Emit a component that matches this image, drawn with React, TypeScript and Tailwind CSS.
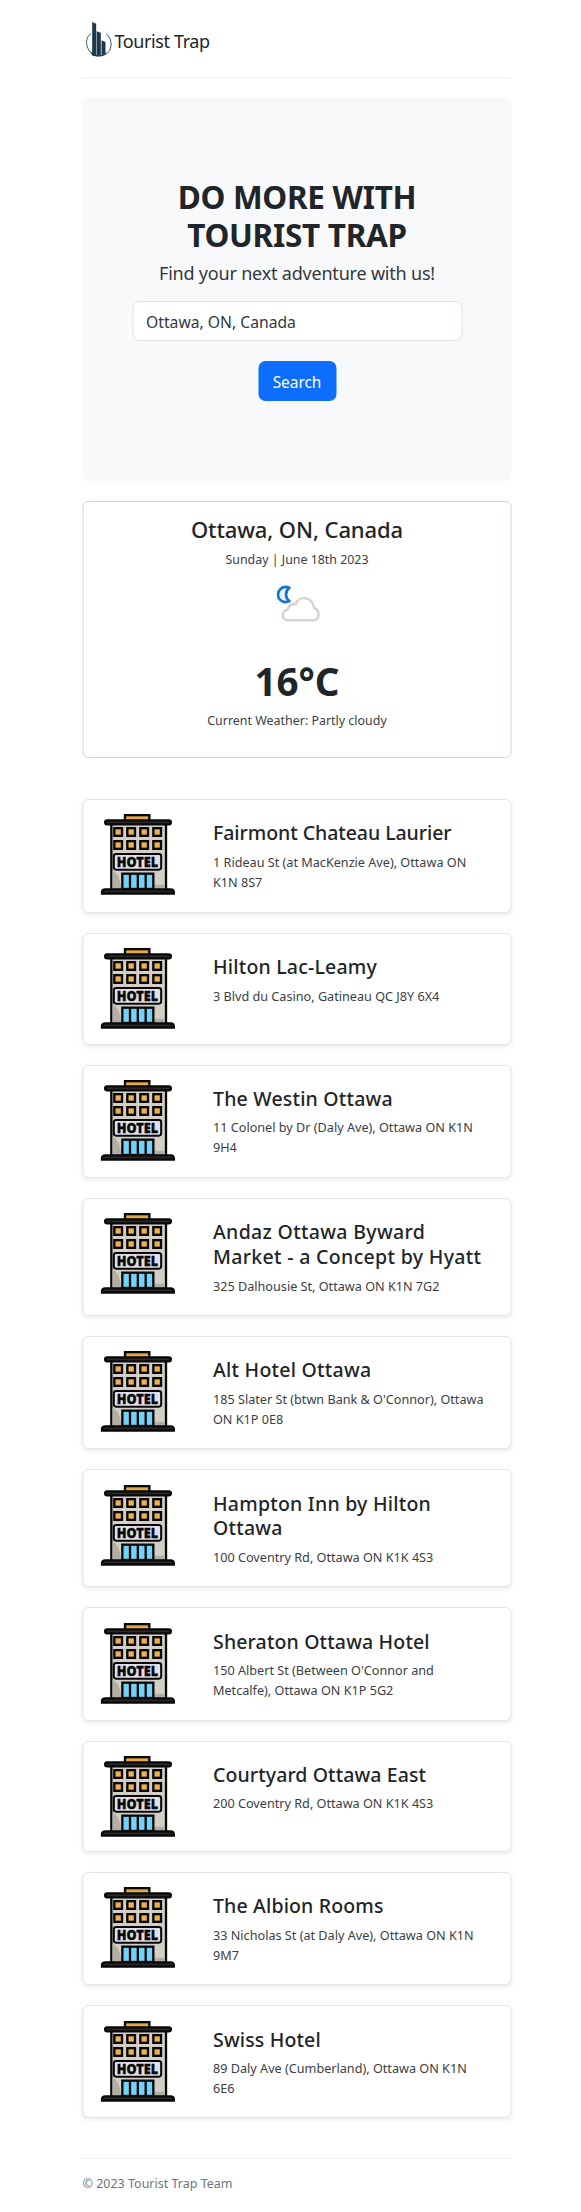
type Hotel = { name: string; address: string; size: string; tracking?: string };

const hotels: Hotel[] = [
  { name: "Fairmont Chateau Laurier", address: "1 Rideau St (at MacKenzie Ave), Ottawa ON K1N 8S7", size: "h-[114px]", tracking: "tracking-[-0.050px]" },
  { name: "Hilton Lac-Leamy", address: "3 Blvd du Casino, Gatineau QC J8Y 6X4", size: "h-[111.5px]", tracking: "tracking-[0.200px]" },
  { name: "The Westin Ottawa", address: "11 Colonel by Dr (Daly Ave), Ottawa ON K1N 9H4", size: "h-[113.5px]", tracking: "tracking-[0.200px]" },
  { name: "Andaz Ottawa Byward Market - a Concept by Hyatt", address: "325 Dalhousie St, Ottawa ON K1N 7G2", size: "h-[118px]", tracking: "tracking-[0.330px]" },
  { name: "Alt Hotel Ottawa", address: "185 Slater St (btwn Bank & O'Connor), Ottawa ON K1P 0E8", size: "h-[113.3px]", tracking: "tracking-[0.250px]" },
  { name: "Hampton Inn by Hilton Ottawa", address: "100 Coventry Rd, Ottawa ON K1K 4S3", size: "h-[118px]", tracking: "tracking-[0.230px]" },
  { name: "Sheraton Ottawa Hotel", address: "150 Albert St (Between O'Connor and Metcalfe), Ottawa ON K1P 5G2", size: "h-[113.3px]" },
  { name: "Courtyard Ottawa East", address: "200 Coventry Rd, Ottawa ON K1K 4S3", size: "h-[111.5px]", tracking: "tracking-[0.100px]" },
  { name: "The Albion Rooms", address: "33 Nicholas St (at Daly Ave), Ottawa ON K1N 9M7", size: "h-[113.2px]" },
  { name: "Swiss Hotel", address: "89 Daly Ave (Cumberland), Ottawa ON K1N 6E6", size: "h-[113px]" },
];

function Logo() {
  return (
    <svg viewBox="43 64 87 110" className="h-[36.67px] w-[29px] shrink-0">
      <path d="M63 102C50 108 45 127 53 145C63 173 104 177 118 152C128 134 121 111 108 103" fill="none" stroke="#1d3a4c" strokeWidth="2.6" />
      <path d="M66 67L78 72V168H66Z M79.500 95L92 99V168H79.500Z M94 122L106 127V162L94 167Z" fill="#1d3a4c" />
      <path d="M60 154C70 169 95 173 110 157L106 164C92 174 73 172 63 163Z" fill="#1d3a4c" />
    </svg>
  );
}

function WeatherIcon() {
  return (
    <svg viewBox="582 252 198 198" className="size-[66px]" fill="none" strokeLinejoin="round" strokeLinecap="round">
      <path d="M657 293C648 290 637 290 630 297C621 305 620 321 628 329C636 337 648 337 657 334C643 322 643 304 657 293Z" fill="#e8f6ff" stroke="#1873cc" strokeWidth="8" />
      <path d="M653 391C632 391 632 361 651 359C653 348 663 341 675 343C683 318 724 315 731 354C749 360 748 391 729 391Z" fill="#fff" stroke="#d2d3d4" strokeWidth="7.500" />
    </svg>
  );
}

function HotelIcon() {
  const columns = [74.5, 113.5, 152.5, 191.5];
  return (
    <svg viewBox="33 27 225 249" className="h-[83px] w-[75px] shrink-0" stroke="#080808" strokeWidth="7">
      <rect x="106.500" y="33.500" width="73" height="21" fill="#e5a84b" />
      <rect x="65.500" y="56" width="164" height="202" fill="#d3cec6" />
      <path d="M69 200C82 204 93 222 95 255H69Z M195 242H226V255H195Z" fill="#b3aea5" stroke="none" />
      <rect x="47" y="49" width="197" height="12" rx="6" fill="#292929" />
      {columns.map((x) => (
        <g key={x} fill="#efb04f">
          <rect x={x} y="72.500" width="23" height="23" />
          <rect x={x} y="111.500" width="23" height="23" />
        </g>
      ))}
      <rect x="73" y="150" width="142" height="47" rx="7" fill="#e0deeb" strokeWidth="6" />
      <text x="82" y="189" textLength="124" lengthAdjust="spacingAndGlyphs" fontFamily="Noto Sans, sans-serif" fontWeight="900" fontSize="43" fill="#080808" strokeWidth="1">HOTEL</text>
      <rect x="98.500" y="209" width="93" height="46" fill="#72d3fa" />
      <path d="M121.500 209V255M145 209V255M168.500 209V255" />
      <path d="M37 268.500C36 259 41 256 48 256H243C250 256 254 259 253 268.500Z" fill="#292929" />
    </svg>
  );
}

function HotelCard({ name, address, size, tracking = "tracking-[0.150px]" }: Hotel) {
  return (
    <article className={`flex rounded-[6px] border border-[#e2e5e9] bg-white pl-[16.500px] shadow-[0_2px_4px_rgba(0,0,0,0.08)] ${size}`}>
      <div className="mr-[38px] pt-[13.300px]">
        <HotelIcon />
      </div>
      <div className="w-[280px] pt-[21.300px]">
        <h2 className={`text-[19.500px] leading-[24.800px] font-medium ${tracking}`}>{name}</h2>
        <p className="mt-[5.800px] w-[276px] text-[12.650px] leading-[20px] text-[#3b4045]">{address}</p>
      </div>
    </article>
  );
}

export default function App() {
  return (
    <div className="h-[2212px] bg-white font-['Noto_Sans',sans-serif] text-[#212529]">
      <div className="mx-auto flex w-[429px] translate-x-[6.500px] flex-col">
        <header className="flex h-[77.500px] items-start border-b-[1.500px] border-[#eeeff0] pt-[21.300px] pl-[2px]">
          <Logo />
          <span className="pt-[6px] pl-px text-[18px] leading-[28px] tracking-[-0.400px]">Tourist Trap</span>
        </header>

        <section className="mt-[19.500px] flex h-[384px] flex-col items-center rounded-[6px] bg-[#f8f9fb] pt-[81px] text-center">
          <h1 className="w-[300px] text-[31.500px] leading-[38.300px] font-bold tracking-[-0.300px]">DO MORE WITH TOURIST TRAP</h1>
          <p className="mt-[4.500px] text-[18px] leading-[28px] tracking-[-0.200px] text-[#33383c]">Find your next adventure with us!</p>
          <input
            defaultValue="Ottawa, ON, Canada"
            className="mt-[13.500px] h-[40px] w-[330px] rounded-[7px] border border-[#dee2e6] bg-white px-[13px] pt-[2px] text-[15.700px] text-[#33383c] outline-none"
          />
          <button className="mt-[20px] h-[40.500px] w-[78px] rounded-[7px] bg-[#0d6efd] pt-[3px] text-[15.400px] text-white">Search</button>
        </section>

        <section className="mt-[20px] flex h-[257px] flex-col items-center rounded-[6px] border border-[#d3d4d5] pt-[13px]">
          <h2 className="text-[22px] leading-[28px] font-medium tracking-[-0.100px]">Ottawa, ON, Canada</h2>
          <p className="mt-[7px] text-[12.400px] leading-[20px] text-[#3b4045]">Sunday | June 18th 2023</p>
          <div className="mt-[4px] mb-[18px]">
            <WeatherIcon />
          </div>
          <strong className="text-[38.500px] leading-[46px] font-bold">16°C</strong>
          <p className="mt-[6.500px] text-[12.450px] leading-[20px] text-[#3b4045]">Current Weather: Partly cloudy</p>
        </section>

        <main className="mt-[41px] flex flex-col gap-[20px]">
          {hotels.map((hotel) => (
            <HotelCard key={hotel.name} {...hotel} />
          ))}
        </main>

        <footer className="mt-[40px] border-t-[1.500px] border-[#eeeff0] pt-[14.500px] text-[12.500px] leading-[20px] text-[#6c757d]">© 2023 Tourist Trap Team</footer>
      </div>
    </div>
  );
}
